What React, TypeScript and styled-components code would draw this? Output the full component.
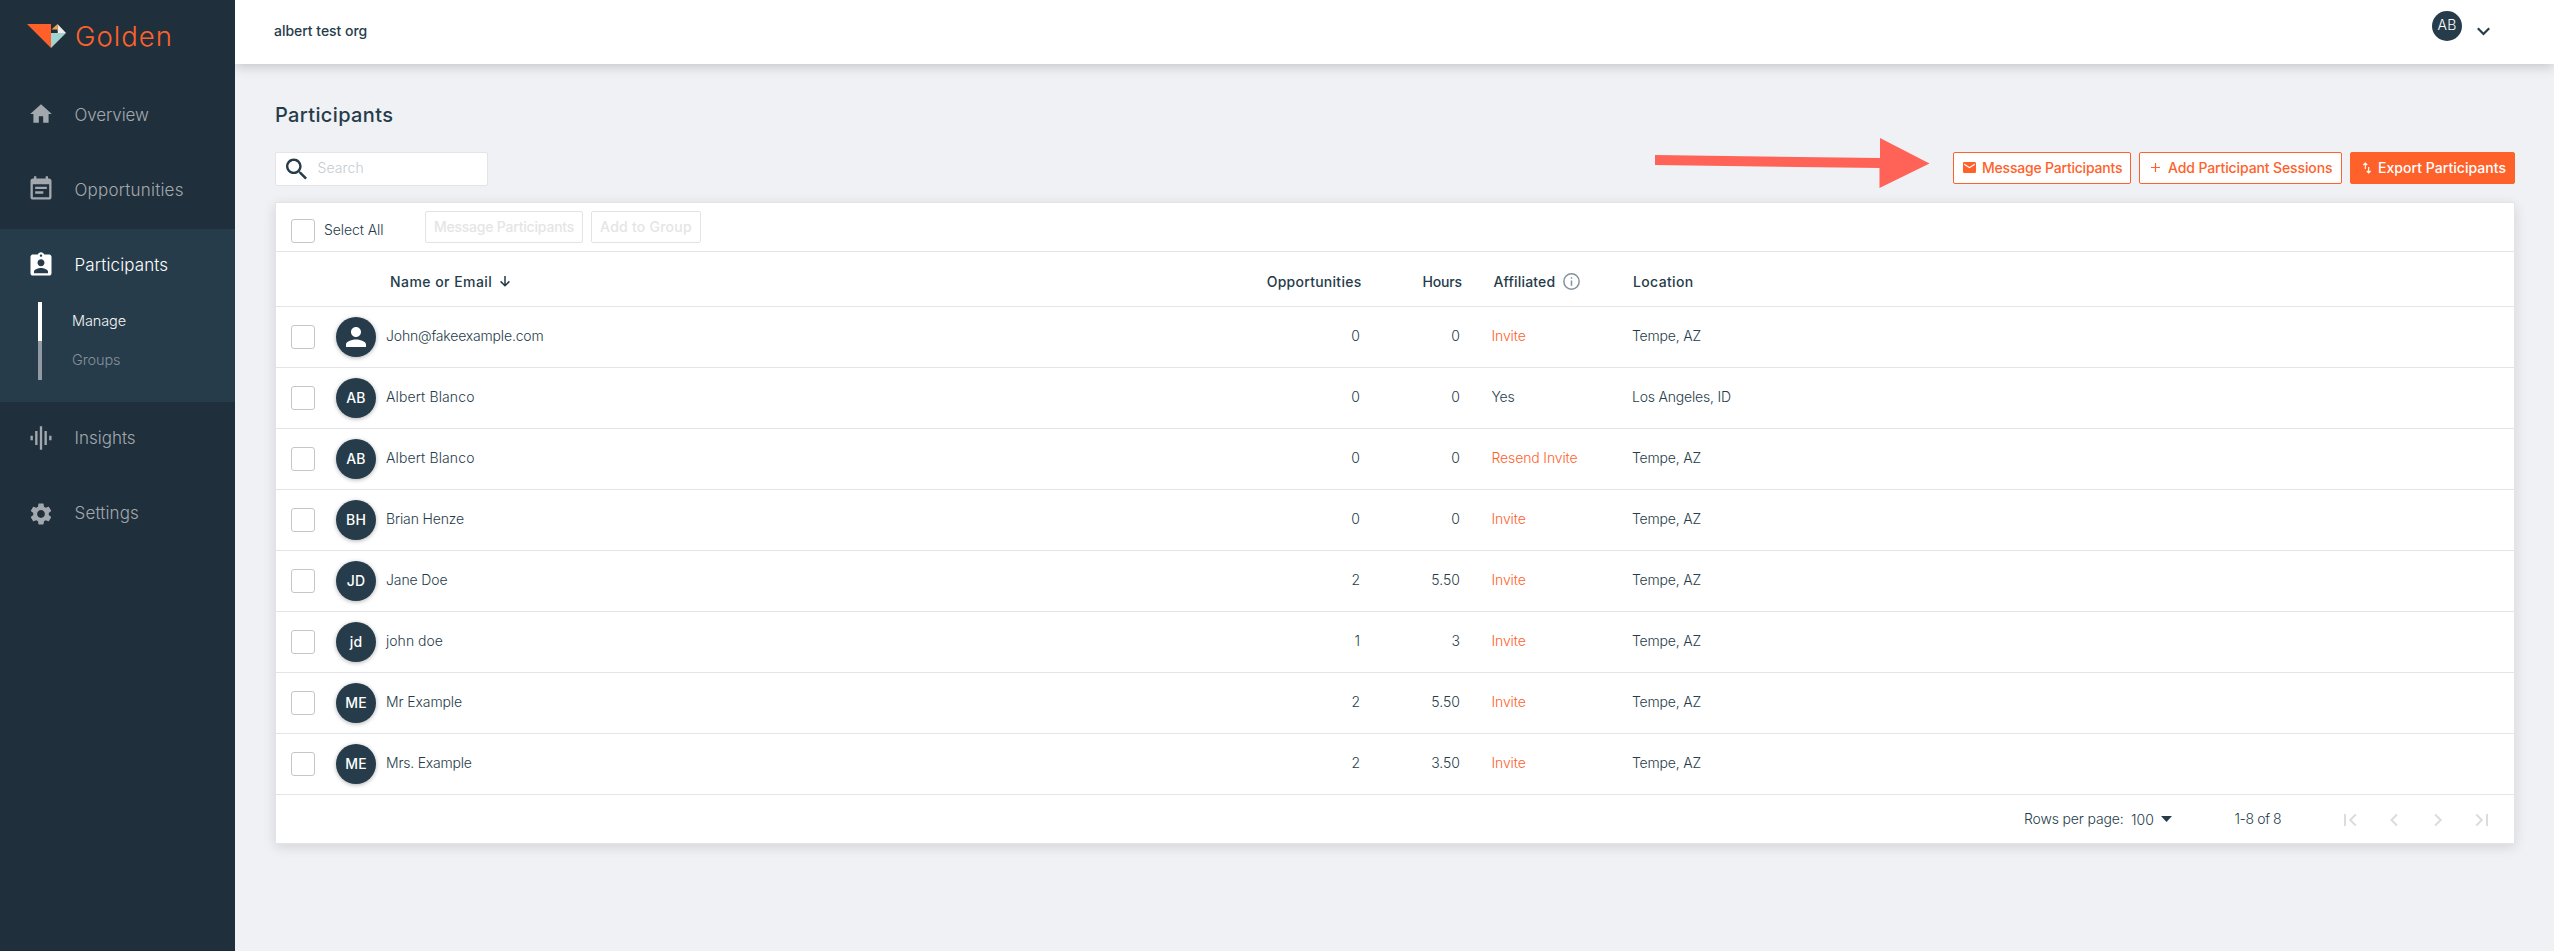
import React from 'react';
import styled, { createGlobalStyle, css } from 'styled-components';

const navy = '#263c4a';
const orange = '#ff612b';
const line = '#e3e3e8';

const GlobalStyle = createGlobalStyle`
  *, *::before, *::after { box-sizing: border-box; }
  body {
    margin: 0;
    background: #f0f1f5;
    color: ${navy};
    font-family: Inter, 'Liberation Sans', sans-serif;
    font-size: 14px;
    overflow: hidden;
  }
  button { font: inherit; }
`;

const Shell = styled.div`
  display: flex;
  width: 100%;
  height: 951px;
`;

/* Sidebar */

const Sidebar = styled.nav`
  flex: none;
  width: 235px;
  background: #1f303c;
  border-bottom: 1px solid #1a2932;
`;

const Brand = styled.div`
  display: flex;
  align-items: flex-start;
  height: 79px;
  padding: 24px 0 0 27px;
`;

const BrandName = styled.span`
  margin: -4px 0 0 8px;
  color: ${orange};
  font-size: 27.5px;
  font-weight: 350;
  line-height: 32px;
  letter-spacing: 1px;
`;

const NavItem = styled.a<{ $active?: boolean; $track?: number }>`
  display: flex;
  align-items: center;
  height: 75px;
  padding-left: 74.5px;
  position: relative;
  color: ${(p) => (p.$active ? '#fff' : '#a3a8ae')};
  font-size: 17px;
  font-weight: 300;
  letter-spacing: ${(p) => p.$track ?? -0.1}px;
  padding-bottom: 3px;
`;

const NavIcon = styled.span<{ $drop?: number }>`
  position: absolute;
  left: 24px;
  top: ${(p) => 18 + (p.$drop ?? 0)}px;
  display: flex;
  align-items: center;
  justify-content: center;
  width: 33px;
  height: 34px;
`;

const ActiveGroup = styled.div`
  height: 173px;
  background: ${navy};
`;

const SubNav = styled.div`
  display: flex;
  flex-direction: column;
  padding: 0 0 0 38px;
  margin-top: -2px;
`;

const SubItem = styled.a<{ $current?: boolean }>`
  height: 39px;
  border-left: 4px solid ${(p) => (p.$current ? '#fff' : '#929ba3')};
  padding-left: 30px;
  color: ${(p) => (p.$current ? '#f3f4f5' : '#84909a')};
  font-size: 14.5px;
  font-weight: ${(p) => (p.$current ? 350 : 300)};
  line-height: 37px;
  letter-spacing: -0.1px;
`;

/* Main area */

const Main = styled.div`
  flex: 1;
  min-width: 0;
  display: flex;
  flex-direction: column;
`;

const TopBar = styled.header`
  display: flex;
  align-items: flex-start;
  justify-content: space-between;
  height: 64px;
  padding: 11px 64px 0 39px;
  background: #fff;
  box-shadow: 0 2px 12px rgba(0, 0, 0, 0.2);
  clip-path: inset(0 0 -20px 0);
`;

const OrgName = styled.span`
  font-weight: 550;
  line-height: 40px;
  letter-spacing: -0.03px;
`;

const Account = styled.div`
  display: flex;
  gap: 15px;
`;

const AccountAvatar = styled.span`
  width: 30px;
  height: 30px;
  border-radius: 50%;
  background: ${navy};
  color: #fff;
  font-weight: 300;
  line-height: 28px;
  text-align: center;
  letter-spacing: 0.3px;
`;

const ChevronDown = styled.svg`
  width: 13px;
  height: 9px;
  margin-top: 15.5px;
`;

const Content = styled.main`
  display: flex;
  flex-direction: column;
  padding: 0 39px 0 40px;
`;

const Title = styled.h1`
  margin: 38px 0 0;
  font-size: 20px;
  font-weight: 500;
  line-height: 26px;
  letter-spacing: 0.36px;
`;

const Toolbar = styled.div`
  display: flex;
  justify-content: space-between;
  align-items: flex-start;
  margin-top: 24px;
  height: 50px;
`;

const SearchBox = styled.label`
  display: flex;
  align-items: center;
  width: 213px;
  height: 34px;
  padding-left: 10px;
  background: #fff;
  border: 1px solid ${line};
  border-radius: 2px;
`;

const SearchInput = styled.input`
  width: 150px;
  margin: 0 0 3px 10.5px;
  padding: 0;
  border: 0;
  outline: 0;
  font: inherit;
  font-weight: 350;
  letter-spacing: 0.1px;
  &::placeholder { color: #c5cbcf; opacity: 1; }
`;

const Actions = styled.div`
  display: flex;
  gap: 8px;
`;

const Arrow = styled.svg`
  width: 276px;
  height: 52px;
  margin: -15px 15px 0 0;
`;

const buttonBase = css`
  display: flex;
  align-items: center;
  height: 32px;
  padding: 0 0 1px;
  border-radius: 2px;
  font-weight: 550;
  white-space: nowrap;
`;

const ActionButton = styled.button<{ $width: number; $lead: number; $gap: number; $track: number; $solid?: boolean }>`
  ${buttonBase}
  width: ${(p) => p.$width}px;
  padding-left: ${(p) => p.$lead}px;
  gap: ${(p) => p.$gap}px;
  letter-spacing: ${(p) => p.$track}px;
  border: 1px solid ${orange};
  background: ${(p) => (p.$solid ? orange : '#fff')};
  color: ${(p) => (p.$solid ? '#fff' : orange)};
  svg { flex: none; }
`;

const BulkButton = styled.button<{ $width: number; $track: number }>`
  ${buttonBase}
  justify-content: center;
  width: ${(p) => p.$width}px;
  border: 1px solid #e3e3e3;
  background: #fff;
  color: #e5e5e5;
  letter-spacing: ${(p) => p.$track}px;
`;

/* Card and table */

const Card = styled.section`
  border: 1px solid ${line};
  background: #fff;
  height: 642px;
  box-shadow: 0 3px 12px rgba(0, 0, 0, 0.12);
`;

const BulkBar = styled.div`
  display: flex;
  height: 49px;
  padding: 16px 0 0 15px;
  border-bottom: 1px solid ${line};
`;

const Checkbox = styled.span`
  width: 24px;
  height: 24px;
  border: 1px solid #c6c6c6;
  border-radius: 3px;
  background: #fff;
`;

const SelectAll = styled.span`
  width: 101px;
  margin-left: 9px;
  font-weight: 350;
  line-height: 21px;
  letter-spacing: -0.08px;
`;

const BulkActions = styled.div`
  display: flex;
  gap: 8px;
  margin-top: -8px;
`;

const rowGrid = css`
  display: grid;
  grid-template-columns: 60px 50px 974px 100px 172px 1fr;
  align-items: center;
  border-bottom: 1px solid ${line};
`;

const HeadRow = styled.div`
  ${rowGrid}
  height: 55px;
  font-weight: 550;
  padding-top: 5px;
`;

const Row = styled.div`
  ${rowGrid}
  height: 61px;
  font-weight: 350;
  ${Checkbox} { margin-left: 15px; }
`;

const HeadCell = styled.span<{ $track: number }>`
  display: flex;
  align-items: center;
  letter-spacing: ${(p) => p.$track}px;
`;

const HeadNumber = styled(HeadCell)<{ $shift: number }>`
  justify-content: flex-end;
  margin-right: ${(p) => -p.$shift}px;
`;

const NameHeading = styled.div`
  display: flex;
  align-items: center;
  justify-content: space-between;
  padding-left: 4px;
`;

const NameSort = styled.span`
  display: flex;
  align-items: center;
  gap: 8px;
`;

const AffiliatedHeading = styled(HeadCell)`
  padding-left: 33.5px;
  gap: 8px;
`;

const LocationHeading = styled(HeadCell)`
  padding-left: 1px;
`;

const Avatar = styled.span`
  display: flex;
  align-items: center;
  justify-content: center;
  width: 40px;
  height: 40px;
  padding-bottom: 1px;
  border-radius: 50%;
  background: ${navy};
  color: #fff;
  font-weight: 550;
  letter-spacing: 0.2px;
  box-shadow: 0 1px 4px rgba(0, 0, 0, 0.3);
`;

const Cell = styled.span<{ $track?: number }>`
  padding-bottom: 4px;
  letter-spacing: ${(p) => p.$track ?? -0.25}px;
`;

const NameAndCount = styled(Cell)`
  display: flex;
  justify-content: space-between;
`;

const NumberCell = styled(Cell)`
  text-align: right;
`;

const Count = styled.span`
  letter-spacing: 0;
`;

const AffiliatedCell = styled(Cell)<{ $link: boolean }>`
  padding-left: 31.5px;
  color: ${(p) => (p.$link ? orange : navy)};
`;

const Footer = styled.div`
  display: flex;
  align-items: center;
  justify-content: flex-end;
  height: 48px;
  padding: 0 25px 1px 0;
  font-weight: 350;
`;

const PageSize = styled.span`
  display: flex;
  align-items: center;
  width: 210.5px;
  letter-spacing: -0.15px;
`;

const PageSizeValue = styled.span`
  margin: 1px 7px 0 7.5px;
  letter-spacing: 0.1px;
`;

const PageRange = styled.span`
  width: 108.5px;
  letter-spacing: -0.4px;
`;

const Pager = styled.svg`
  width: 146px;
  height: 14px;
  margin-top: 2px;
`;

const Glyph = ({ d, size }: { d: string; size: number }) => (
  <svg width={size} height={size} viewBox="0 0 24 24" fill="currentColor">
    <path d={d} />
  </svg>
);

const icons = {
  home: 'M10 20v-6h4v6h5v-8h3L12 3 2 12h3v8z',
  note: 'M17 10H7v2h10v-2zm2-7h-1V1h-2v2H8V1H6v2H5c-1.11 0-1.99.9-1.99 2L3 19c0 1.1.89 2 2 2h14c1.1 0 2-.9 2-2V5c0-1.1-.9-2-2-2zm0 16H5V8h14v11zm-5-5H7v2h7v-2z',
  badge: 'M19 3h-4.18C14.4 1.84 13.3 1 12 1c-1.3 0-2.4.84-2.82 2H5c-1.1 0-2 .9-2 2v14c0 1.1.9 2 2 2h14c1.1 0 2-.9 2-2V5c0-1.1-.9-2-2-2zm-7 0c.55 0 1 .45 1 1s-.45 1-1 1-1-.45-1-1 .45-1 1-1zm0 4c1.66 0 3 1.34 3 3s-1.34 3-3 3-3-1.34-3-3 1.34-3 3-3zm6 12H6v-1.4c0-2 4-3.1 6-3.1s6 1.1 6 3.1V19z',
  wave: 'M7 18h2V6H7v12zm4 4h2V2h-2v20zm-8-8h2v-4H3v4zm12 4h2V6h-2v12zm4-8v4h2v-4h-2z',
  gear: 'M19.14 12.94c.04-.3.06-.61.06-.94 0-.32-.02-.64-.07-.94l2.03-1.58c.18-.14.23-.41.12-.61l-1.92-3.32c-.12-.22-.37-.29-.59-.22l-2.39.96c-.5-.38-1.03-.7-1.62-.94L14.4 2.81c-.04-.24-.24-.41-.48-.41h-3.84c-.24 0-.43.17-.47.41L9.25 5.35c-.59.24-1.13.57-1.62.94l-2.39-.96c-.22-.08-.47 0-.59.22L2.74 8.87c-.12.21-.08.47.12.61l2.03 1.58c-.05.3-.09.63-.09.94s.02.64.07.94l-2.03 1.58c-.18.14-.23.41-.12.61l1.92 3.32c.12.22.37.29.59.22l2.39-.96c.5.38 1.03.7 1.62.94l.36 2.54c.05.24.24.41.48.41h3.84c.24 0 .44-.17.47-.41l.36-2.54c.59-.24 1.13-.56 1.62-.94l2.39.96c.22.08.47 0 .59-.22l1.92-3.32c.12-.22.07-.47-.12-.61l-2.01-1.58zM12 15.6c-1.98 0-3.6-1.62-3.6-3.6s1.62-3.6 3.6-3.6 3.6 1.62 3.6 3.6-1.62 3.6-3.6 3.6z',
  search: 'M15.5 14h-.79l-.28-.27C15.41 12.59 16 11.11 16 9.5 16 5.91 13.09 3 9.5 3S3 5.91 3 9.5 5.91 16 9.5 16c1.61 0 3.09-.59 4.23-1.57l.27.28v.79l5 4.99L20.49 19l-4.99-5zm-6 0C7.01 14 5 11.99 5 9.5S7.01 5 9.5 5 14 7.01 14 9.5 11.99 14 9.5 14z',
  person: 'M12 12c2.21 0 4-1.79 4-4s-1.79-4-4-4-4 1.79-4 4 1.79 4 4 4zm0 2c-2.67 0-8 1.34-8 4v2h16v-2c0-2.66-5.33-4-8-4z',
};

type Person = {
  initials: string | null;
  name: string;
  track: number;
  opportunities: string;
  hours: string;
  affiliated: string;
  location: string;
};

const people: Person[] = [
  { initials: null, name: 'John@fakeexample.com', track: -0.18, opportunities: '0', hours: '0', affiliated: 'Invite', location: 'Tempe, AZ' },
  { initials: 'AB', name: 'Albert Blanco', track: 0.12, opportunities: '0', hours: '0', affiliated: 'Yes', location: 'Los Angeles, ID' },
  { initials: 'AB', name: 'Albert Blanco', track: 0.12, opportunities: '0', hours: '0', affiliated: 'Resend Invite', location: 'Tempe, AZ' },
  { initials: 'BH', name: 'Brian Henze', track: -0.14, opportunities: '0', hours: '0', affiliated: 'Invite', location: 'Tempe, AZ' },
  { initials: 'JD', name: 'Jane Doe', track: -0.12, opportunities: '2', hours: '5.50', affiliated: 'Invite', location: 'Tempe, AZ' },
  { initials: 'jd', name: 'john doe', track: 0.02, opportunities: '1', hours: '3', affiliated: 'Invite', location: 'Tempe, AZ' },
  { initials: 'ME', name: 'Mr Example', track: -0.1, opportunities: '2', hours: '5.50', affiliated: 'Invite', location: 'Tempe, AZ' },
  { initials: 'ME', name: 'Mrs. Example', track: -0.22, opportunities: '2', hours: '3.50', affiliated: 'Invite', location: 'Tempe, AZ' },
];

const Logo = () => (
  <svg width="40" height="24" viewBox="0 0 40 24">
    <path d="M0 0H24V24z" fill="#ff5f28" />
    <path d="M24 9H39L24 24z" fill="#a3d3d0" />
    <path d="M30.500 0L39 9H30.500z" fill="#f4ece8" />
    <path d="M24.500 5.500L30.500 0V5.500z" fill="#f3a24f" />
    <path d="M25.500 6.500H30.500V9H25.500z" fill="#22313a" />
  </svg>
);

export default function App() {
  return (
    <>
      <GlobalStyle />
      <Shell>
        <Sidebar>
          <Brand>
            <Logo />
            <BrandName>Golden</BrandName>
          </Brand>
          <NavItem $track={-0.1}>
            <NavIcon><Glyph d={icons.home} size={26} /></NavIcon>
            Overview
          </NavItem>
          <NavItem $track={0.2}>
            <NavIcon><Glyph d={icons.note} size={28} /></NavIcon>
            Opportunities
          </NavItem>
          <ActiveGroup>
            <NavItem $active $track={0.12}>
              <NavIcon $drop={1}><Glyph d={icons.badge} size={28} /></NavIcon>
              Participants
            </NavItem>
            <SubNav>
              <SubItem $current>Manage</SubItem>
              <SubItem>Groups</SubItem>
            </SubNav>
          </ActiveGroup>
          <NavItem $track={0}>
            <NavIcon $drop={1}><Glyph d={icons.wave} size={28} /></NavIcon>
            Insights
          </NavItem>
          <NavItem $track={0.15}>
            <NavIcon $drop={1.5}><Glyph d={icons.gear} size={26} /></NavIcon>
            Settings
          </NavItem>
        </Sidebar>

        <Main>
          <TopBar>
            <OrgName>albert test org</OrgName>
            <Account>
              <AccountAvatar>AB</AccountAvatar>
              <ChevronDown viewBox="0 0 13 9" fill="none" stroke={navy} strokeWidth="2.200">
                <path d="M.8 1.200L6.500 7L12.200 1.200" />
              </ChevronDown>
            </Account>
          </TopBar>

          <Content>
            <Title>Participants</Title>
            <Toolbar>
              <SearchBox>
                <svg width="21" height="22" viewBox="3 3 17.500 17.500" fill={navy}>
                  <path d={icons.search} />
                </svg>
                <SearchInput placeholder="Search" />
              </SearchBox>
              <Actions>
                <Arrow viewBox="0 0 276 52" fill="#ff6358">
                  <path d="M1 18L226 21V1L275.500 26.500L225.500 51V31L1 28z" />
                </Arrow>
                <ActionButton $width={178} $lead={9} $gap={6} $track={-0.21}>
                  <svg width="13" height="11" viewBox="0 0 13 11" fill={orange}>
                    <path d="M1.300 0H11.700A1.300 1.300 0 0 1 13 1.300V9.700A1.300 1.300 0 0 1 11.700 11H1.300A1.300 1.300 0 0 1 0 9.700V1.300A1.300 1.300 0 0 1 1.300 0zM1.200 1.600V2.900L6.500 6.200L11.800 2.900V1.600L6.500 4.900z" />
                  </svg>
                  Message Participants
                </ActionButton>
                <ActionButton $width={203} $lead={11} $gap={8} $track={-0.12}>
                  <svg width="9" height="9" viewBox="0 0 9 9" stroke={orange} strokeWidth="1.200">
                    <path d="M4.500 0V9M0 4.500H9" />
                  </svg>
                  Add Participant Sessions
                </ActionButton>
                <ActionButton $solid $width={165} $lead={12} $gap={7} $track={0.04}>
                  <svg width="8" height="12" viewBox="0 0 8 12" fill="none" stroke="#fff" strokeWidth="1.100">
                    <path d="M2.300 7V1.300M.4 3L2.300 1L4.200 3M5.700 5V10.700M3.800 9L5.700 11L7.600 9" />
                  </svg>
                  Export Participants
                </ActionButton>
              </Actions>
            </Toolbar>

            <Card>
              <BulkBar>
                <Checkbox />
                <SelectAll>Select All</SelectAll>
                <BulkActions>
                  <BulkButton $width={158} $track={-0.21} disabled>Message Participants</BulkButton>
                  <BulkButton $width={110} $track={0.25} disabled>Add to Group</BulkButton>
                </BulkActions>
              </BulkBar>

              <HeadRow>
                <span />
                <span />
                <NameHeading>
                  <NameSort>
                    <HeadCell $track={0.45}>Name or Email</HeadCell>
                    <svg width="10" height="11" viewBox="0 0 10 11" fill="none" stroke={navy} strokeWidth="1.500">
                      <path d="M5 0V9.800M.6 5.400L5 9.800L9.400 5.400" />
                    </svg>
                  </NameSort>
                  <HeadNumber $track={0.27} $shift={1.5}>Opportunities</HeadNumber>
                </NameHeading>
                <HeadNumber $track={-0.15} $shift={2}>Hours</HeadNumber>
                <AffiliatedHeading $track={0.18}>
                  Affiliated
                  <svg width="17" height="17" viewBox="0 0 16 16" fill="none" stroke="#84919a" strokeWidth="1.400">
                    <circle cx="8" cy="8" r="7.200" />
                    <path d="M8 7V12M8 4V5.500" />
                  </svg>
                </AffiliatedHeading>
                <LocationHeading $track={0.35}>Location</LocationHeading>
              </HeadRow>

              {people.map((p, i) => (
                <Row key={i}>
                  <Checkbox />
                  <Avatar>
                    {p.initials ?? <Glyph d={icons.person} size={30} />}
                  </Avatar>
                  <NameAndCount $track={p.track}>
                    {p.name}
                    <Count>{p.opportunities}</Count>
                  </NameAndCount>
                  <NumberCell $track={0}>{p.hours}</NumberCell>
                  <AffiliatedCell $link={p.affiliated !== 'Yes'} $track={-0.13}>{p.affiliated}</AffiliatedCell>
                  <Cell $track={-0.2}>{p.location}</Cell>
                </Row>
              ))}

              <Footer>
                <PageSize>
                  Rows per page:
                  <PageSizeValue>100</PageSizeValue>
                  <svg width="11" height="6" viewBox="0 0 11 6" fill={navy}>
                    <path d="M0 0H11L5.500 6z" />
                  </svg>
                </PageSize>
                <PageRange>1-8 of 8</PageRange>
                <Pager viewBox="0 0 146 14" fill="none" stroke="#dcdcdc" strokeWidth="2">
                  <path d="M2 1V13M12.800 1.500L7.200 7L12.800 12.500" />
                  <path d="M54 1.500L48.500 7L54 12.500" />
                  <path d="M92.200 1.500L97.700 7L92.200 12.500" />
                  <path d="M133.300 1.500L138.800 7L133.300 12.500M144 1V13" />
                </Pager>
              </Footer>
            </Card>
          </Content>
        </Main>
      </Shell>
    </>
  );
}
